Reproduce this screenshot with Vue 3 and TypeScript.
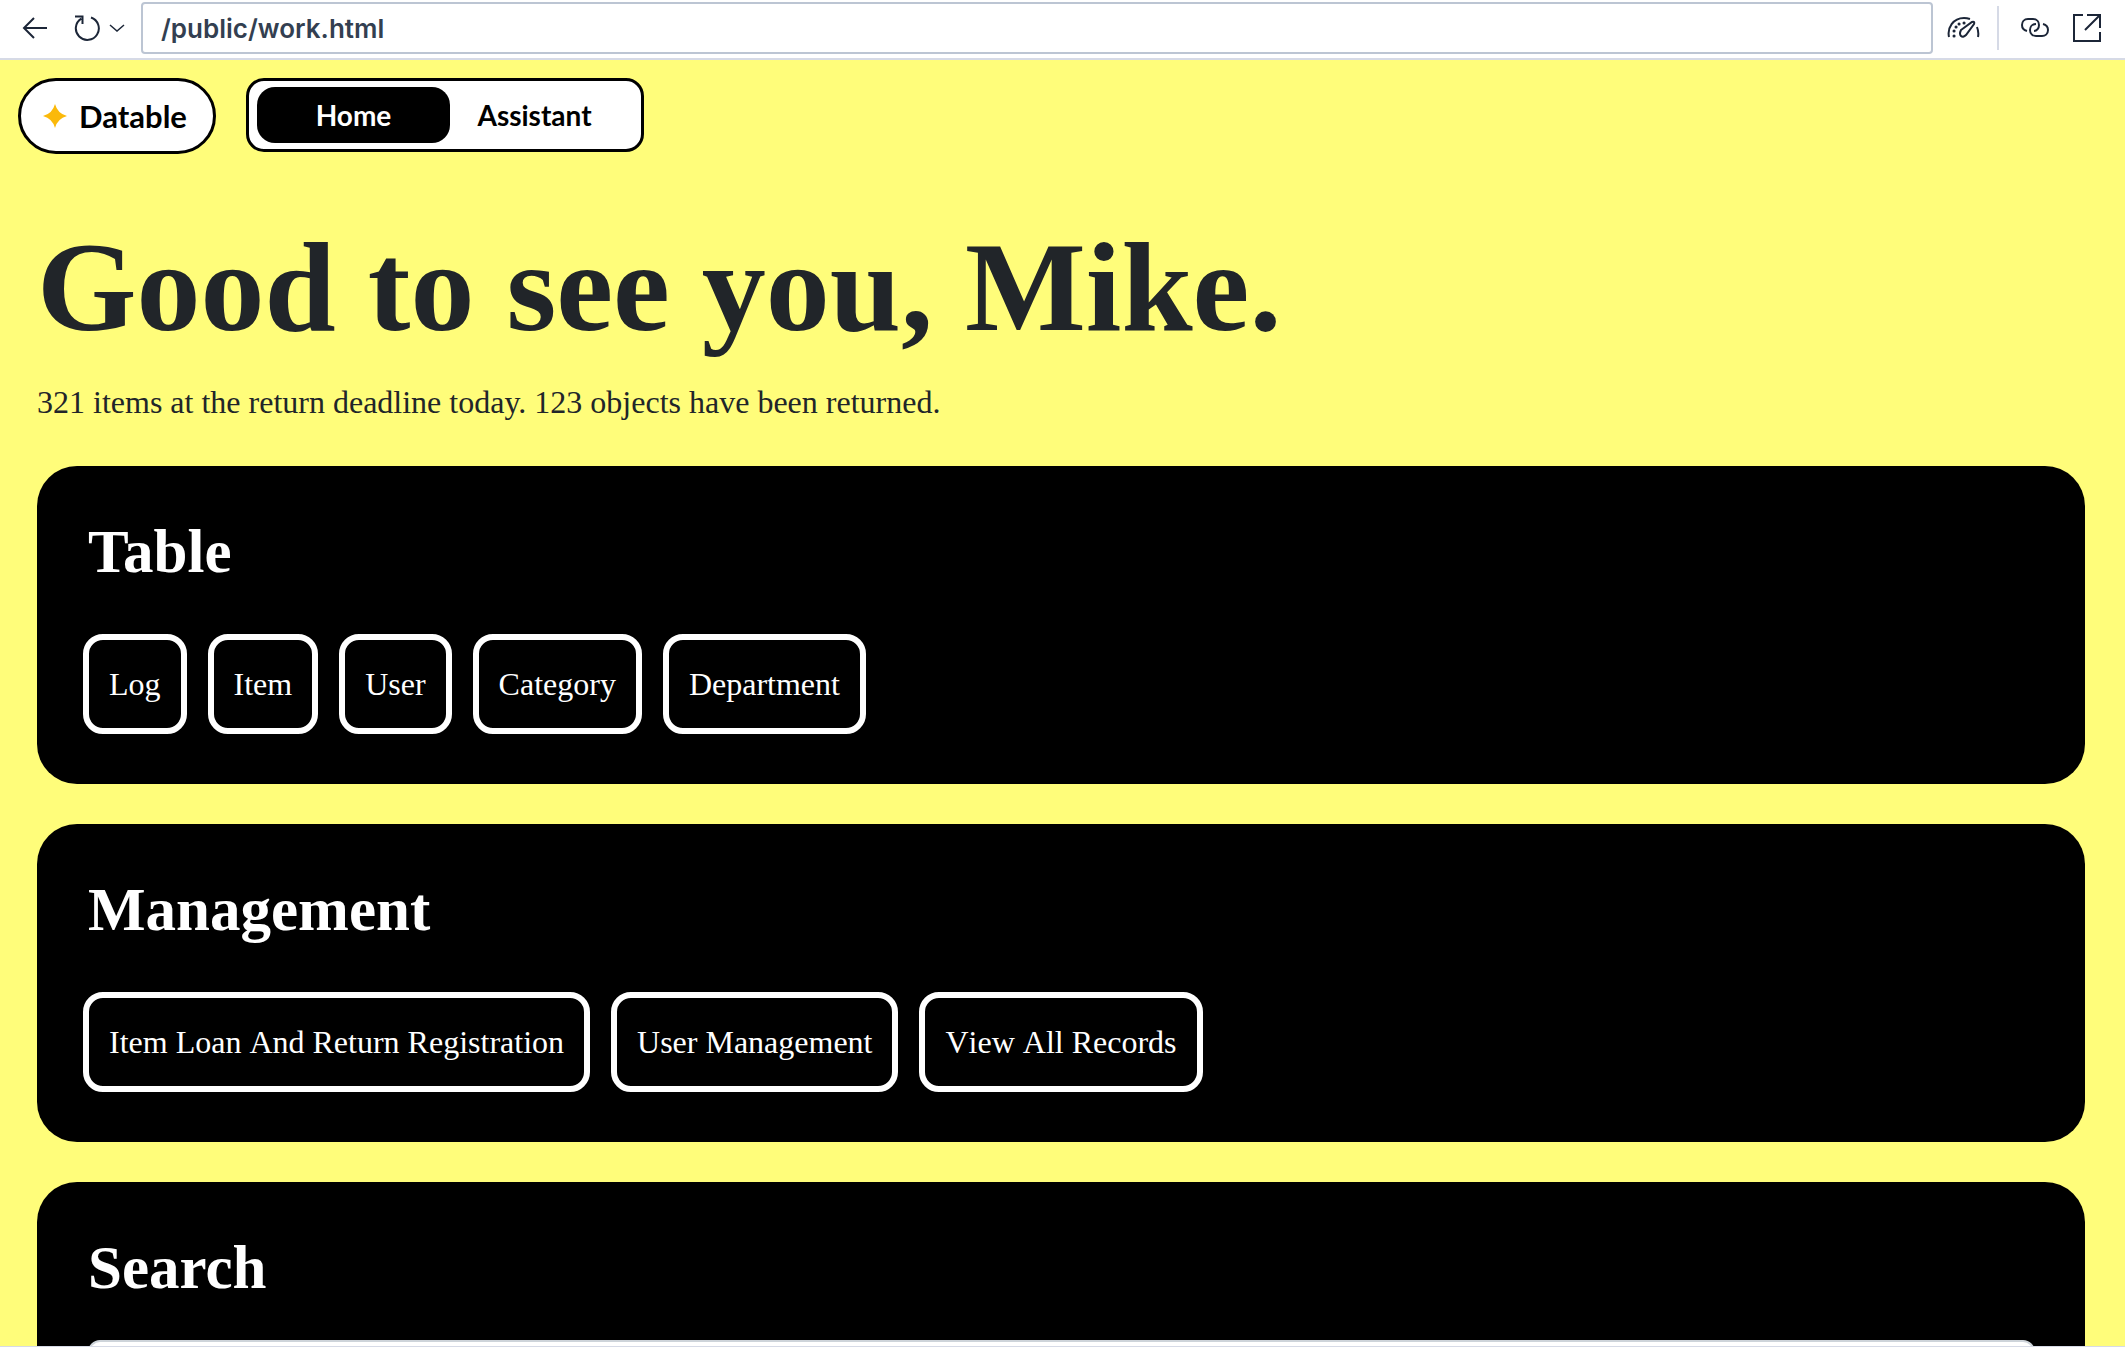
<script setup lang="ts">
interface CardData {
  title: string
  links: string[]
}

const cards: CardData[] = [
  { title: 'Table', links: ['Log', 'Item', 'User', 'Category', 'Department'] },
  {
    title: 'Management',
    links: ['Item Loan And Return Registration', 'User Management', 'View All Records'],
  },
]
</script>

<template>
  <div class="window">
    <header class="toolbar">
      <button class="tool back" type="button" aria-label="Back">
        <svg width="28" height="28" viewBox="0 0 28 28"><path d="M27 14H4M14 4L4 14l10 10" /></svg>
      </button>
      <button class="tool reload" type="button" aria-label="Reload">
        <svg width="28" height="28" viewBox="0 0 28 28">
          <path d="M18 3.500A11.500 11.500 0 1 1 8.300 4.600M2 2.500h7.500v7.500" />
        </svg>
      </button>
      <button class="tool more" type="button" aria-label="Reload options">
        <svg width="16" height="10" viewBox="0 0 16 10"><path class="thin" d="M1 2l7 6 7-6" /></svg>
      </button>
      <input class="address" type="text" value="/public/work.html" aria-label="Address" />
      <button class="tool gauge" type="button" aria-label="Performance">
        <svg width="34" height="24" viewBox="0 0 34 24">
          <path d="M2 21C0 12 6 2 17 2q3 0 6 1M30 11q2 5 1 10M14 14L25 6q3-1 2 2L19 19q-3 3-5 1t0-6z" />
          <path class="dots" d="M7 20h.1M7 15h.1M9 11h.1M12 8h.1M17 7h.1" />
        </svg>
      </button>
      <span class="divider"></span>
      <button class="tool chain" type="button" aria-label="Copy link">
        <svg width="30" height="24" viewBox="0 0 30 24">
          <path d="M7 15C3 14 2 11 2 9c0-3 2-6 6-6h5c4 0 6 3 6 6s-2 6-5 6M23 8c4 1 5 4 5 6 0 4-3 6-6 6h-6c-3 0-6-2-6-6 0-3 2-6 6-6" />
        </svg>
      </button>
      <button class="tool open" type="button" aria-label="Open in new tab">
        <svg width="30" height="30" viewBox="0 0 30 30">
          <path d="M11 2H2v26h26V19M15 2h13v13M28 2L13 17" />
        </svg>
      </button>
    </header>

    <div class="page">
      <nav class="nav">
        <a class="brand" href="#">
          <svg width="24" height="24" viewBox="0 0 24 24">
            <path d="M12 0Q14.500 9.500 24 12 14.500 14.500 12 24 9.500 14.500 0 12 9.500 9.500 12 0z" />
          </svg>
          <span>Datable</span>
        </a>
        <div class="tabs">
          <a class="tab active" href="#">Home</a>
          <a class="tab" href="#">Assistant</a>
        </div>
      </nav>

      <main class="content">
        <h1>Good to see you, Mike.</h1>
        <p class="summary">321 items at the return deadline today. 123 objects have been returned.</p>

        <section v-for="card in cards" :key="card.title" class="card">
          <h2>{{ card.title }}</h2>
          <div class="links">
            <a v-for="link in card.links" :key="link" class="link" href="#">{{ link }}</a>
          </div>
        </section>

        <section class="card">
          <h2>Search</h2>
          <input class="search" type="text" aria-label="Search" />
        </section>
      </main>
    </div>
  </div>
</template>

<style>
body {
  margin: 0;
}
</style>

<style scoped>
* {
  box-sizing: border-box;
}

.window {
  display: flex;
  flex-direction: column;
  height: 100vh;
  overflow: hidden;
  background: #fffd7a;
  border-bottom: 1px solid #d6dae6;
  font-family: 'Liberation Serif', 'Times New Roman', serif;
  color: #212529;
}

.toolbar {
  display: flex;
  flex: none;
  align-items: center;
  height: 60px;
  padding: 0 23px 2px 20px;
  background: #fff;
  border-bottom: 2px solid #d6dae6;
}

.tool {
  display: flex;
  flex: none;
  padding: 0;
  border: 0;
  background: none;
}

.tool svg {
  fill: none;
  stroke: #1c2638;
  stroke-width: 2;
}

.tool .thin {
  stroke-width: 1.5;
}

.tool .dots {
  stroke-width: 3;
  stroke-linecap: round;
}

.reload {
  margin-left: 25px;
}

.more {
  margin: 0 16px 0 8px;
}

.address {
  flex: 1;
  min-width: 0;
  height: 52px;
  padding: 0 18px;
  border: 2px solid #bcc5d3;
  border-radius: 4px;
  background: #fff;
  color: #333f51;
  font: 600 26px Inter, sans-serif;
}

.gauge {
  margin-left: 14px;
}

.divider {
  width: 2px;
  height: 44px;
  margin: 0 21px 0 16px;
  background: #d6dae6;
}

.open {
  margin-left: 22px;
}

.page {
  flex: 1;
  min-height: 0;
  overflow: hidden;
}

.nav {
  display: flex;
  align-items: flex-start;
  gap: 30px;
  padding: 18px 18px 0;
}

.nav a {
  color: #000;
  font-family: Lato, sans-serif;
  font-weight: 700;
  text-decoration: none;
}

.nav .brand {
  display: flex;
  align-items: center;
  justify-content: center;
  gap: 12px;
  min-width: 198px;
  height: 76px;
  padding: 0 24px 0 20px;
  border: 3px solid #000;
  border-radius: 38px;
  background: #fff;
  font-size: 31px;
}

.brand svg {
  fill: #fbb90a;
}

.tabs {
  display: flex;
  height: 74px;
  padding: 6px 22px 6px 8px;
  border: 3px solid #000;
  border-radius: 18px;
  background: #fff;
}

.tab {
  display: flex;
  align-items: center;
  justify-content: center;
  width: 193px;
  border-radius: 18px;
  font-size: 28px;
}

.tab + .tab {
  width: 169px;
}

.nav .tab.active {
  background: #000;
  color: #fff;
}

.content {
  padding: 56px 40px 0 37px;
}

h1 {
  margin: 0;
  font-size: 128px;
  line-height: 154px;
}

.summary {
  margin: 14px 0 40px;
  font-size: 32px;
  line-height: 48px;
}

.card {
  height: 318px;
  margin-bottom: 40px;
  padding: 48px 50px 48px 51px;
  border-radius: 40px;
  background: #000;
  color: #fff;
}

h2 {
  margin: 0 0 34px;
  font-size: 61px;
  line-height: 76px;
}

.links {
  display: flex;
  gap: 21px;
  margin: 44px 0 0 -5px;
}

.link {
  padding: 20px;
  border: 6px solid #fff;
  border-radius: 20px;
  color: #fff;
  font-size: 32px;
  font-kerning: none;
  line-height: 48px;
  text-decoration: none;
}

.search {
  width: 100%;
  height: 76px;
  border: 2px solid #ced4da;
  border-radius: 12px;
  background: #fff;
}
</style>
